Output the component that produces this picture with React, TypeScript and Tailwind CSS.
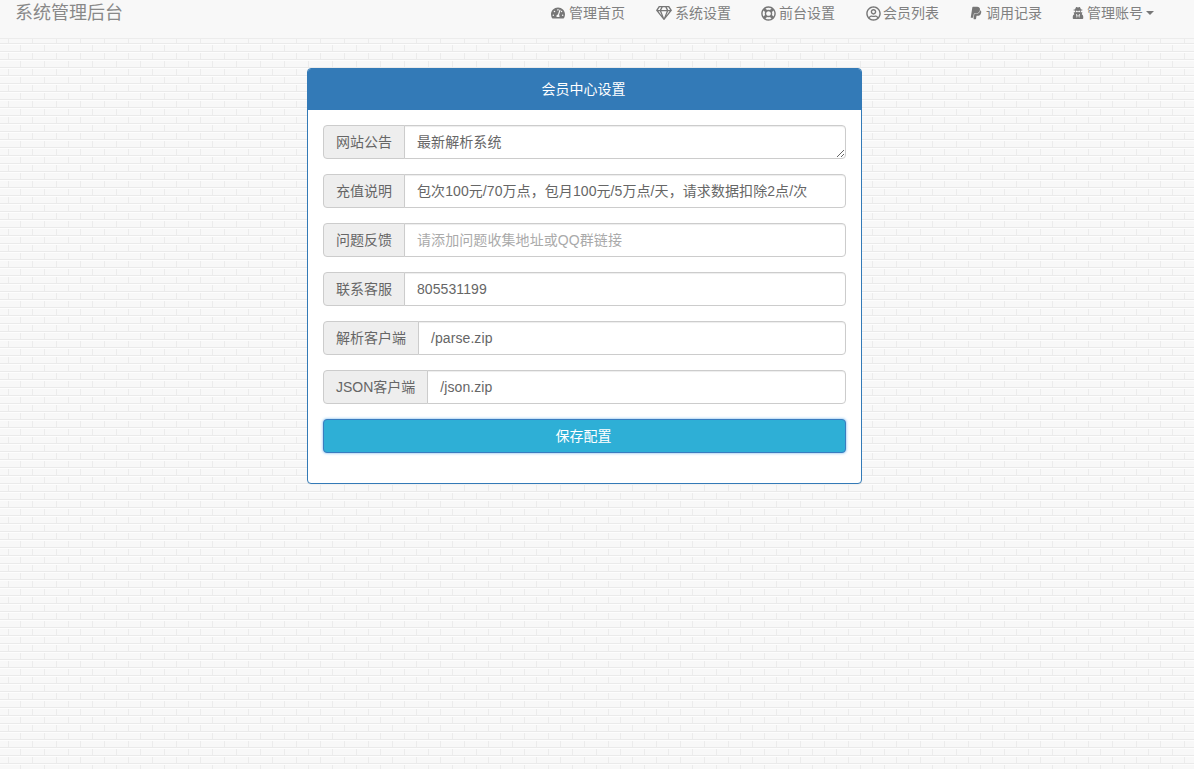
import React from "react";
import { FaTachometerAlt, FaRegGem, FaRegLifeRing, FaRegUserCircle, FaPaypal, FaUserSecret } from "react-icons/fa";

const font = "[font-family:'Liberation_Sans','Noto_Sans_CJK_SC',sans-serif]";

const nav = [
  { label: "管理首页", icon: <FaTachometerAlt size={14} />, cell: "w-[18px]" },
  { label: "系统设置", icon: <span className="pl-px flex"><FaRegGem size={16} /></span>, cell: "w-[20px]" },
  { label: "前台设置", icon: <FaRegLifeRing size={15} />, cell: "w-[18px]" },
  { label: "会员列表", icon: <span className="pl-px flex"><FaRegUserCircle size={15} /></span>, cell: "w-[18px]" },
  { label: "调用记录", icon: <FaPaypal size={14} />, cell: "w-[17px]" },
  { label: "管理账号", icon: <FaUserSecret size={12} />, cell: "w-[15px]", caret: true },
];

const rows: { label: string; value?: string; placeholder?: string; area?: boolean }[] = [
  { label: "网站公告", value: "最新解析系统", area: true },
  { label: "充值说明", value: "包次100元/70万点，包月100元/5万点/天，请求数据扣除2点/次" },
  { label: "问题反馈", placeholder: "请添加问题收集地址或QQ群链接" },
  { label: "联系客服", value: "805531199" },
  { label: "解析客户端", value: "/parse.zip" },
  { label: "JSON客户端", value: "/json.zip" },
];

export default function App() {
  return (
    <div
      className={`min-h-[769px] ${font} text-[14px] text-[#666] bg-[#f8f8f8] bg-[image:linear-gradient(#eaeaea_1px,#fdfdfd_1px,#fdfdfd_2px,transparent_2px),conic-gradient(at_1px_8px,transparent_75%,#ececec_0),conic-gradient(at_1px_8px,transparent_75%,#ececec_0)] bg-[length:100%_8px,24px_16px,24px_16px] bg-[position:0_3px,8px_3px,20px_11px]`}
    >
      <nav className="h-[39px] bg-[#f8f8f8] border-b border-[#ececec] flex justify-between overflow-hidden">
        <a className="pl-[15px] text-[18px] leading-[26px] text-[#888]">系统管理后台</a>
        <ul className="flex pr-[25px]">
          {nav.map((n) => (
            <li key={n.label} className="px-[15px] h-[26px] flex items-center text-[#777] leading-[26px]">
              <span className={`${n.cell} flex`}>{n.icon}</span>
              <span className="text-[#808080]">{n.label}</span>
              {n.caret && <span className="ml-[3px] w-0 h-0 border-x-[4px] border-x-transparent border-t-[4px] border-t-[#777]" />}
            </li>
          ))}
        </ul>
      </nav>
      <div className="ml-[307px] pt-[29px]">
        <div className="w-[555px] h-[416px] bg-white border border-[#337ab7] rounded-[4px] shadow-[0_1px_1px_rgba(0,0,0,0.05)]">
          <div className="h-[41px] bg-[#337ab7] text-white text-center leading-[41px] rounded-t-[3px] pr-[2px]">会员中心设置</div>
          <div className="px-[15px] pt-[15px] flex flex-col gap-[15px]">
            {rows.map((r) => (
              <div key={r.label} className="flex h-[34px]">
                <div className="px-[12px] bg-[#eee] border border-[#ccc] rounded-l-[4px] leading-[32px] text-[#666] whitespace-nowrap">
                  {r.label}
                </div>
                <div
                  className={`relative flex-1 -ml-px px-[12px] bg-white border border-[#ccc] rounded-r-[4px] leading-[32px] tracking-[0.08px] shadow-[inset_0_1px_1px_rgba(0,0,0,0.075)] whitespace-nowrap overflow-hidden ${r.placeholder ? "text-[#aaa]" : "text-[#666]"}`}
                >
                  {r.value ?? r.placeholder}
                  {r.area && (
                    <svg className="absolute right-0 bottom-0" width="10" height="10" viewBox="0 0 10 10">
                      <path d="M9 2 2 9M9 6 6 9" stroke="#666" strokeWidth="1" fill="none" />
                    </svg>
                  )}
                </div>
              </div>
            ))}
            <button className="h-[34px] bg-[#2eafd6] border border-[#3a7cc0] rounded-[4px] text-white text-center pr-[2px] shadow-[0_0_3px_#66afe9]">
              保存配置
            </button>
          </div>
        </div>
      </div>
    </div>
  );
}
